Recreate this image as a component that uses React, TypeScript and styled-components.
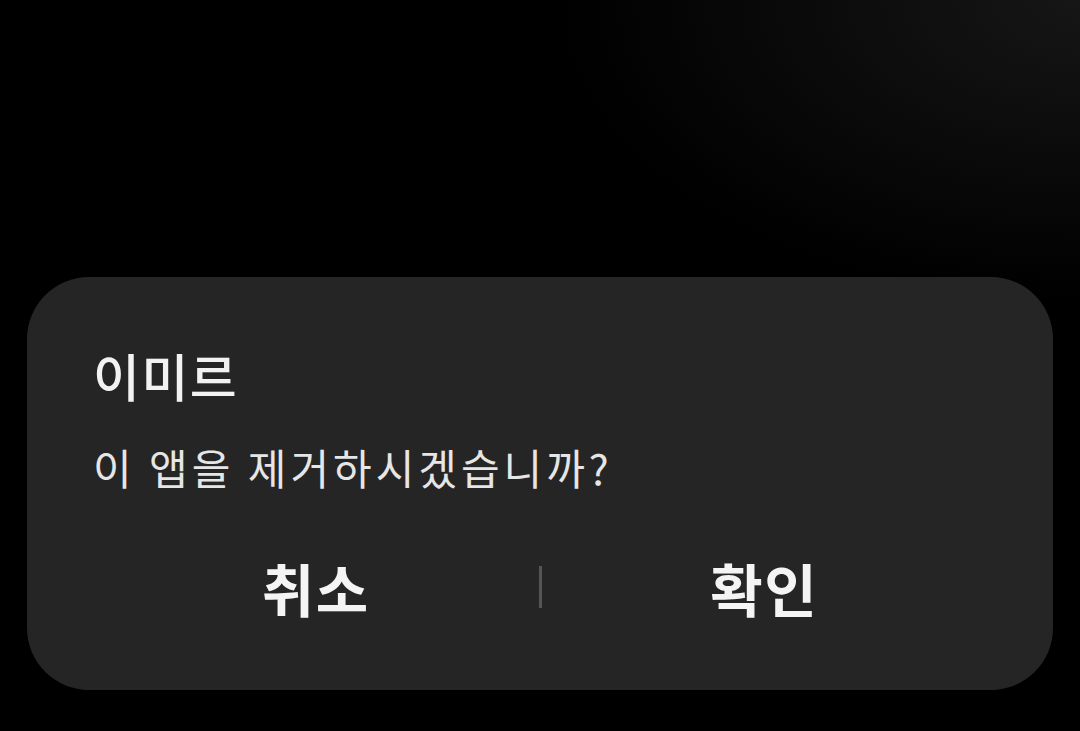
import styled, { createGlobalStyle } from 'styled-components';

const GlobalStyle = createGlobalStyle`
  html, body {
    margin: 0;
    padding: 0;
    background: #000;
  }
  body {
    font-family: "Noto Sans CJK KR", "Noto Sans", sans-serif;
  }
`

const Screen = styled.div`
  width: 1080px;
  height: 731px;
  overflow: hidden;
  background:
    radial-gradient(ellipse 520px 300px at 1080px 0px, rgba(40, 40, 40, 0.55), rgba(0, 0, 0, 0) 100%),
    #000;
  display: flex;
  flex-direction: column;
  justify-content: flex-end;
  padding: 0 27px 41px;
  box-sizing: border-box;
`

const Dialog = styled.div`
  background: #252525;
  border-radius: 62px;
  padding: 68px 66px 70px;
  display: flex;
  flex-direction: column;
`

const Title = styled.h2`
  margin: 0;
  font-size: 51px;
  line-height: 60px;
  font-weight: 500;
  letter-spacing: 1.5px;
  color: #f2f2f2;
`

const Message = styled.p`
  margin: 37px 0 0;
  font-size: 42px;
  line-height: 50px;
  font-weight: 400;
  letter-spacing: 4px;
  color: #e6e6e6;
`

const Actions = styled.div`
  margin-top: 62px;
  display: grid;
  grid-template-columns: 1fr auto 1fr;
  align-items: center;
`

const ActionButton = styled.button`
  background: none;
  border: none;
  padding: 0;
  font-family: inherit;
  font-size: 57px;
  line-height: 66px;
  font-weight: 700;
  letter-spacing: 1.5px;
  color: #f4f4f4;
  cursor: pointer;
  text-align: center;
`

const Divider = styled.div`
  width: 3px;
  height: 42px;
  background: #555;
`

export default function App() {
  return (
    <>
      <GlobalStyle />
      <Screen>
        <Dialog>
          <Title>이미르</Title>
          <Message>이 앱을 제거하시겠습니까?</Message>
          <Actions>
            <ActionButton>취소</ActionButton>
            <Divider />
            <ActionButton>확인</ActionButton>
          </Actions>
        </Dialog>
      </Screen>
    </>
  );
}
